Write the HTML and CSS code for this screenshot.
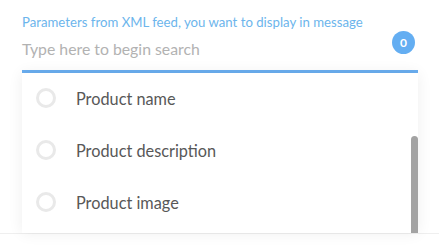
FILE: index.html
```html
<!DOCTYPE html>
<html>
<head>
<meta charset="utf-8">
<link rel="stylesheet" href="styles.css">
</head>
<body>
<div class="page">
  <div class="field">
    <div class="label">Parameters from XML feed, you want to display in message</div>
    <div class="input-row">
      <span class="placeholder">Type here to begin search</span>
      <span class="badge">0</span>
    </div>
  </div>
  <div class="dropdown">
    <ul class="list">
      <li class="item"><span class="radio"></span><span class="name">Product name</span></li>
      <li class="item"><span class="radio"></span><span class="name">Product description</span></li>
      <li class="item"><span class="radio"></span><span class="name">Product image</span></li>
    </ul>
    <div class="scrollbar"></div>
  </div>
  <div class="bottom-line"></div>
</div>
</body>
</html>
```
FILE: styles.css
```css
* { box-sizing: border-box; }
html, body { margin: 0; padding: 0; background: #fff; }
body { font-family: "Lato", "Noto Sans", sans-serif; width: 439px; height: 248px; overflow: hidden; }
.page { padding-top: 13px; }
.field { margin: 0 21px 0 22px; }
.label { font-size: 13.2px; color: #6cb5ec; line-height: 18px; height: 16px; }
.input-row {
  display: flex; align-items: center; justify-content: space-between;
  height: 44px; border-bottom: 3px solid #6aaef0; padding-bottom: 2px;
}
.placeholder { font-size: 15.8px; color: #b2b2b2; }
.badge {
  width: 23px; height: 23px; border-radius: 50%; background: #64aef2; color: #fff;
  font-size: 12px; font-weight: 700; display: flex; align-items: center; justify-content: center;
  margin-right: 3px; margin-bottom: 12px;
}
.dropdown {
  position: relative; margin: 0 21px 0 22px; height: 160px; overflow: hidden;
  background: #fff; box-shadow: 0 0 14px rgba(0,0,0,0.07);
}
.list { list-style: none; margin: -1px 0 0; padding: 0; }
.item { display: flex; align-items: center; height: 52px; padding-left: 14px; }
.radio { width: 20px; height: 20px; border-radius: 50%; border: 3.5px solid #e9e9e9; margin-right: 20px; }
.name { font-size: 16.3px; color: #585858; }
.scrollbar {
  position: absolute; right: 0; top: 63px; bottom: 0; width: 7px;
  background: #a3a3a3; border-radius: 4px 4px 0 0;
}
.bottom-line { height: 1px; background: #efefef; }
```
